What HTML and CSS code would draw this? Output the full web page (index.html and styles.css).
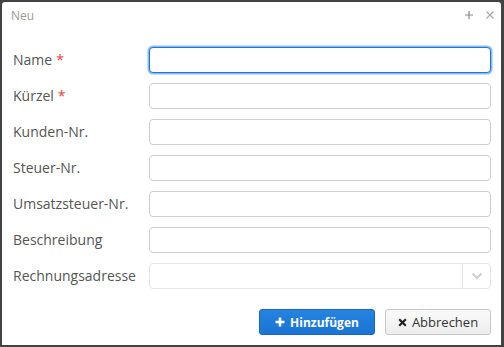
FILE: index.html
```html
<!DOCTYPE html>
<html lang="de">
<head>
<meta charset="utf-8">
<title>Neu</title>
<link rel="stylesheet" href="styles.css">
</head>
<body>
<div class="dialog">
  <div class="titlebar">
    <span class="title">Neu</span>
    <span class="tools">
      <svg class="tool" width="10" height="10" viewBox="0 0 10 10"><path d="M5 1v8M1 5h8" stroke="#8a8a8a" stroke-width="1.2"/></svg>
      <svg class="tool" width="10" height="10" viewBox="0 0 10 10"><path d="M1.5 1.5l7 7M8.5 1.5l-7 7" stroke="#aaa" stroke-width="1.2"/></svg>
    </span>
  </div>
  <form class="form">
    <label class="label">Name<span class="req">*</span></label>
    <input class="input focused" type="text">
    <label class="label">Kürzel<span class="req">*</span></label>
    <input class="input" type="text">
    <label class="label">Kunden-Nr.</label>
    <input class="input" type="text">
    <label class="label">Steuer-Nr.</label>
    <input class="input" type="text">
    <label class="label">Umsatzsteuer-Nr.</label>
    <input class="input" type="text">
    <label class="label">Beschreibung</label>
    <input class="input" type="text">
    <label class="label">Rechnungsadresse</label>
    <div class="select">
      <span class="select-value"></span>
      <span class="select-arrow">
        <svg width="12" height="8" viewBox="0 0 12 8"><path d="M1.5 1.5l4.5 4.5 4.5-4.5" fill="none" stroke="#cfcfcf" stroke-width="2"/></svg>
      </span>
    </div>
  </form>
  <div class="buttons">
    <button class="btn primary" type="button">
      <svg width="10" height="10" viewBox="0 0 10 10"><path d="M5 0.5v9M0.5 5h9" stroke="#fff" stroke-width="2.6"/></svg>
      Hinzufügen
    </button>
    <button class="btn secondary" type="button">
      <svg width="9" height="9" viewBox="0 0 9 9"><path d="M1.2 1.2l6.6 6.6M7.8 1.2l-6.6 6.6" stroke="#222" stroke-width="2.2"/></svg>
      Abbrechen
    </button>
  </div>
</div>
</body>
</html>
```

FILE: styles.css
```css
html, body {
  margin: 0;
  padding: 0;
}
body {
  background: #424242;
  width: 504px;
  height: 347px;
  overflow: hidden;
  font-family: "Open Sans", "Liberation Sans", sans-serif;
  padding: 2px 3px 2px 2px;
  box-sizing: border-box;
}
.dialog {
  background: #fff;
  width: 499px;
  height: 343px;
  border-radius: 3px 3px 0 0;
  box-sizing: border-box;
  display: flex;
  flex-direction: column;
}
.titlebar {
  height: 26px;
  display: flex;
  align-items: center;
  justify-content: space-between;
  padding: 0 6px 0 9px;
}
.title {
  font-size: 12px;
  color: #9a9a9a;
}
.tools {
  display: flex;
  gap: 11px;
  align-items: center;
}
.tool {
  display: block;
}
.form {
  margin: 19px 10px 0 11px;
  display: grid;
  grid-template-columns: 136px 1fr;
  grid-auto-rows: 26px;
  row-gap: 10px;
  align-items: center;
}
.label {
  font-size: 14px;
  color: #555;
  line-height: 26px;
}
.req {
  color: #e8413c;
  margin-left: 4px;
}
.input {
  height: 26px;
  box-sizing: border-box;
  border: 1px solid #cfcfcf;
  border-radius: 4px;
  margin: 0;
  padding: 2px 6px;
  font: 14px "Open Sans", sans-serif;
  width: 100%;
  outline: none;
  background: #fff;
}
.input.focused {
  border-color: #1f78d1;
  box-shadow: 0 0 0 1.5px #8ebbef;
}
.select {
  height: 26px;
  box-sizing: border-box;
  border: 1px solid #e6e6e6;
  border-radius: 4px;
  display: flex;
}
.select-value {
  flex: 1;
}
.select-arrow {
  width: 27px;
  border-left: 1px solid #ebebeb;
  display: flex;
  align-items: center;
  justify-content: center;
}
.buttons {
  display: flex;
  justify-content: flex-end;
  gap: 10px;
  margin: 20px 10px 0 0;
}
.btn {
  height: 26px;
  box-sizing: border-box;
  border-radius: 3px;
  display: flex;
  align-items: center;
  justify-content: center;
  gap: 5px;
  padding: 0;
  font-family: "Open Sans", sans-serif;
}
.btn.primary {
  width: 116px;
  background: linear-gradient(#2683e0, #1a74d3);
  border: 1px solid #1667bf;
  color: #fff;
  font-size: 12px;
  font-weight: bold;
}
.btn.secondary {
  width: 106px;
  background: linear-gradient(#fafafa, #ededed);
  border: 1px solid #c6c6c6;
  color: #333;
  font-size: 13px;
}
```
